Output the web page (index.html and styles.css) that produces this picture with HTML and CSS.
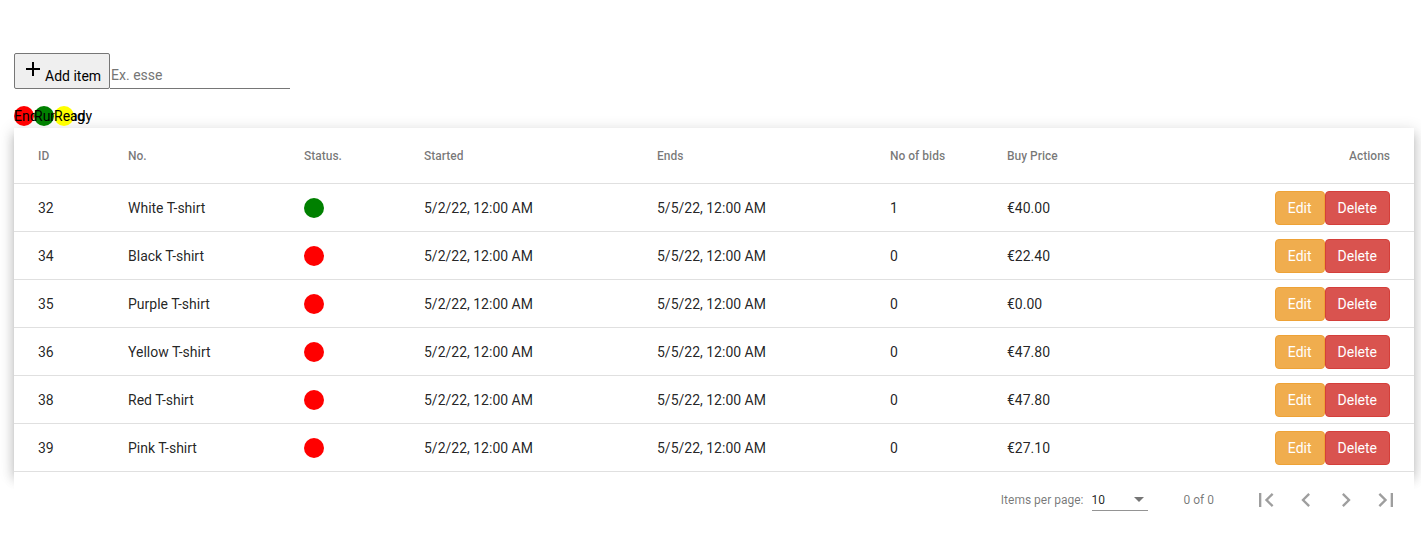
FILE: index.html
```html
<!DOCTYPE html>
<html lang="en">

<head>
    <meta charset="UTF-8">
    <meta name="viewport" content="width=device-width, initial-scale=1.0">
    <title>Items</title>
    <link rel="stylesheet" href="styles.css">
</head>

<body>

    <div class="page">

        <div class="toolbar">
            <button class="add-btn"><svg class="add-icon" viewBox="0 0 24 24"><path d="M19 13h-6v6h-2v-6H5v-2h6V5h2v6h6v2z"/></svg>Add item</button><input class="search" type="text" placeholder="Ex. esse">
        </div>

        <div class="legend"><span class="dot red">Ended</span><span class="dot green">Running</span><span class="dot yellow">Ready</span></div>

        <table class="items">
            <colgroup>
                <col class="c-id">
                <col class="c-no">
                <col class="c-status">
                <col class="c-date">
                <col class="c-date">
                <col class="c-bids">
                <col class="c-price">
                <col>
            </colgroup>
            <thead>
                <tr>
                    <th>ID</th>
                    <th>No.</th>
                    <th>Status.</th>
                    <th>Started</th>
                    <th>Ends</th>
                    <th>No of bids</th>
                    <th>Buy Price</th>
                    <th class="actions">Actions</th>
                </tr>
            </thead>
            <tbody>
                <tr>
                    <td>32</td>
                    <td>White T-shirt</td>
                    <td><span class="status green"></span></td>
                    <td>5/2/22, 12:00 AM</td>
                    <td>5/5/22, 12:00 AM</td>
                    <td>1</td>
                    <td>€40.00</td>
                    <td class="actions"><button class="btn btn-edit">Edit</button><button class="btn btn-delete">Delete</button></td>
                </tr>
                <tr>
                    <td>34</td>
                    <td>Black T-shirt</td>
                    <td><span class="status red"></span></td>
                    <td>5/2/22, 12:00 AM</td>
                    <td>5/5/22, 12:00 AM</td>
                    <td>0</td>
                    <td>€22.40</td>
                    <td class="actions"><button class="btn btn-edit">Edit</button><button class="btn btn-delete">Delete</button></td>
                </tr>
                <tr>
                    <td>35</td>
                    <td>Purple T-shirt</td>
                    <td><span class="status red"></span></td>
                    <td>5/2/22, 12:00 AM</td>
                    <td>5/5/22, 12:00 AM</td>
                    <td>0</td>
                    <td>€0.00</td>
                    <td class="actions"><button class="btn btn-edit">Edit</button><button class="btn btn-delete">Delete</button></td>
                </tr>
                <tr>
                    <td>36</td>
                    <td>Yellow T-shirt</td>
                    <td><span class="status red"></span></td>
                    <td>5/2/22, 12:00 AM</td>
                    <td>5/5/22, 12:00 AM</td>
                    <td>0</td>
                    <td>€47.80</td>
                    <td class="actions"><button class="btn btn-edit">Edit</button><button class="btn btn-delete">Delete</button></td>
                </tr>
                <tr>
                    <td>38</td>
                    <td>Red T-shirt</td>
                    <td><span class="status red"></span></td>
                    <td>5/2/22, 12:00 AM</td>
                    <td>5/5/22, 12:00 AM</td>
                    <td>0</td>
                    <td>€47.80</td>
                    <td class="actions"><button class="btn btn-edit">Edit</button><button class="btn btn-delete">Delete</button></td>
                </tr>
                <tr>
                    <td>39</td>
                    <td>Pink T-shirt</td>
                    <td><span class="status red"></span></td>
                    <td>5/2/22, 12:00 AM</td>
                    <td>5/5/22, 12:00 AM</td>
                    <td>0</td>
                    <td>€27.10</td>
                    <td class="actions"><button class="btn btn-edit">Edit</button><button class="btn btn-delete">Delete</button></td>
                </tr>
            </tbody>
        </table>

        <div class="paginator">
            <div class="page-size">
                <span class="page-size-label">Items per page:</span>
                <div class="size-select">
                    <span class="size-value">10</span>
                    <span class="size-arrow"></span>
                </div>
            </div>
            <div class="range-label">0 of 0</div>
            <button class="page-btn"><svg viewBox="0 0 24 24"><path d="M18.41 16.59L13.82 12l4.59-4.59L17 6l-6 6 6 6zM6 6h2v12H6z"/></svg></button>
            <button class="page-btn"><svg viewBox="0 0 24 24"><path d="M15.41 7.41L14 6l-6 6 6 6 1.41-1.41L10.83 12z"/></svg></button>
            <button class="page-btn"><svg viewBox="0 0 24 24"><path d="M10 6L8.59 7.41 13.17 12l-4.58 4.59L10 18l6-6z"/></svg></button>
            <button class="page-btn"><svg viewBox="0 0 24 24"><path d="M5.59 7.41L10.18 12l-4.59 4.59L7 18l6-6-6-6zM16 6h2v12h-2z"/></svg></button>
        </div>

    </div>

</body>

</html>
```

FILE: styles.css
```css
* {
    box-sizing: border-box;
}

body {
    margin: 0;
    font-family: Roboto, "Liberation Sans", sans-serif;
    font-size: 14px;
    color: #000;
    background-color: #fff;
}

.page {
    padding: 53px 7px 0 14px;
}

/* 顶部：新增按钮 + 搜索框 */
.toolbar {
    display: flex;
    align-items: flex-end;
}

.add-btn {
    height: 36px;
    padding: 0 8px 2px 6px;
    font-family: Roboto, "Liberation Sans", sans-serif;
    font-size: 14px;
    color: #000;
    background-color: #efefef;
    border: 1px solid #767676;
    border-radius: 2px;
}

.add-icon {
    width: 24px;
    height: 24px;
    fill: #000;
    vertical-align: baseline;
}

.search {
    width: 180px;
    height: 24px;
    padding: 0 1px 4px;
    font-family: Roboto, "Liberation Sans", sans-serif;
    font-size: 14px;
    border: none;
    border-bottom: 1px solid #767676;
    outline: none;
}

.search::placeholder {
    color: #757575;
}

/* 状态图例 */
.legend {
    height: 20px;
    margin: 17px 0 2px;
    line-height: 20px;
}

.dot {
    display: inline-block;
    width: 20px;
    height: 20px;
    border-radius: 50%;
    white-space: nowrap;
    vertical-align: top;
}

.red {
    background-color: #ff0000;
}

.green {
    background-color: #008000;
}

.yellow {
    background-color: #ffff00;
}

/* 表格 */
.items {
    width: 100%;
    table-layout: fixed;
    border-spacing: 0;
    background-color: #fff;
    box-shadow: 0 5px 5px -3px rgba(0, 0, 0, .2), 0 8px 10px 1px rgba(0, 0, 0, .14), 0 3px 14px 2px rgba(0, 0, 0, .12);
}

.c-id {
    width: 114px;
}

.c-no {
    width: 176px;
}

.c-status {
    width: 120px;
}

.c-date {
    width: 233px;
}

.c-bids {
    width: 117px;
}

.c-price {
    width: 150px;
}

.items th,
.items td {
    padding: 0;
    text-align: left;
    vertical-align: middle;
    border-bottom: 1px solid rgba(0, 0, 0, .12);
}

.items th:first-child,
.items td:first-child {
    padding-left: 24px;
}

.items th:last-child,
.items td:last-child {
    padding-right: 24px;
}

.items thead tr {
    height: 56px;
}

.items th {
    font-size: 12px;
    font-weight: 500;
    color: rgba(0, 0, 0, .54);
}

.items tbody tr {
    height: 48px;
}

.items td {
    color: rgba(0, 0, 0, .87);
}

.items .actions {
    text-align: right;
}

.status {
    display: inline-block;
    width: 20px;
    height: 20px;
    border-radius: 50%;
    vertical-align: middle;
}

.btn {
    padding: 6px 12px;
    font-family: Roboto, "Liberation Sans", sans-serif;
    font-size: 14px;
    line-height: 20px;
    color: #fff;
    border: 1px solid transparent;
    border-radius: 4px;
    vertical-align: middle;
    cursor: pointer;
}

.btn-edit {
    background-color: #f0ad4e;
    border-color: #eea236;
}

.btn-delete {
    background-color: #d9534f;
    border-color: #d43f3a;
}

/* 分页 */
.paginator {
    display: flex;
    align-items: center;
    justify-content: flex-end;
    height: 56px;
    padding: 0 8px;
    font-size: 12px;
    color: rgba(0, 0, 0, .54);
    background-color: #fff;
}

.page-size {
    display: flex;
    align-items: center;
    margin-right: 8px;
}

.page-size-label {
    margin: 0 4px;
}

.size-select {
    display: flex;
    align-items: center;
    justify-content: space-between;
    width: 56px;
    height: 21px;
    margin: 0 4px;
    padding-right: 4px;
    border-bottom: 1px solid rgba(0, 0, 0, .42);
}

.size-value {
    color: rgba(0, 0, 0, .87);
}

.size-arrow {
    width: 0;
    height: 0;
    border-left: 5px solid transparent;
    border-right: 5px solid transparent;
    border-top: 5px solid rgba(0, 0, 0, .54);
}

.range-label {
    margin: 0 32px 0 24px;
}

.page-btn {
    display: flex;
    align-items: center;
    justify-content: center;
    width: 40px;
    height: 40px;
    padding: 0;
    background: none;
    border: none;
}

.page-btn svg {
    width: 28px;
    height: 28px;
    fill: rgba(0, 0, 0, .38);
}
```
